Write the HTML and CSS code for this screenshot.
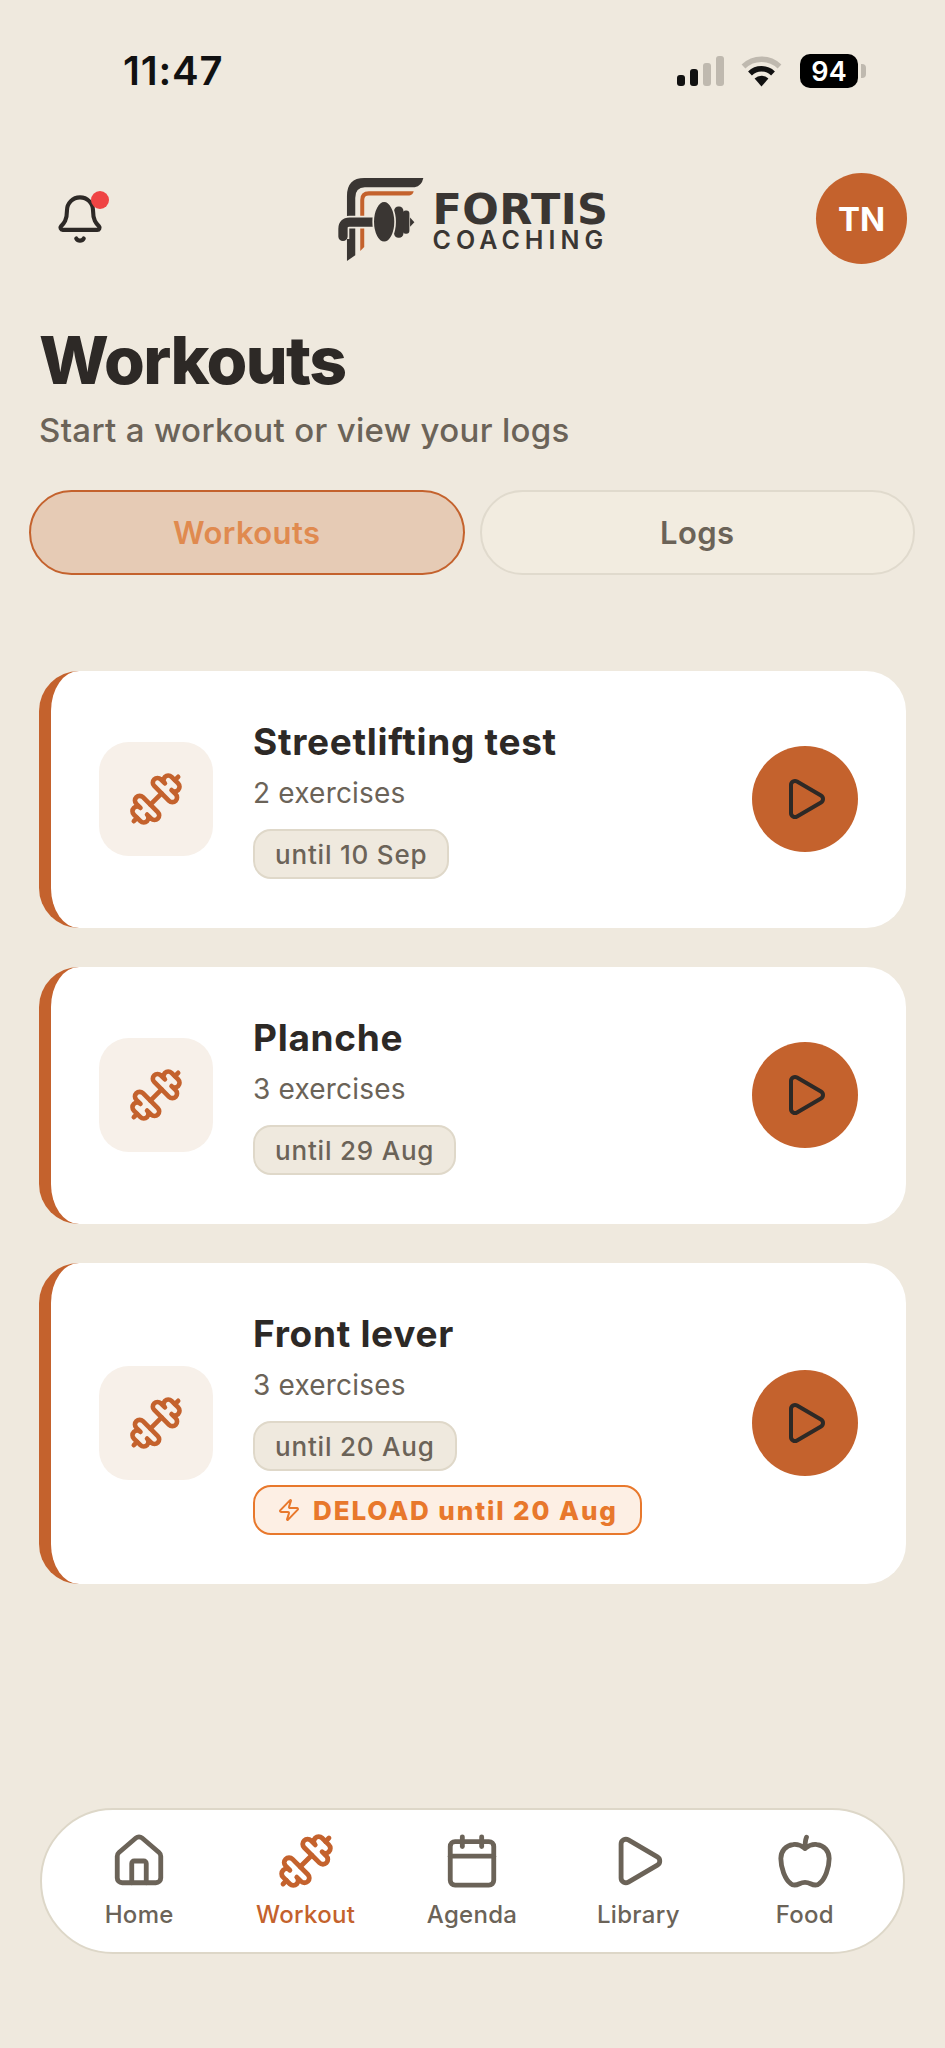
FILE: index.html
```html
<!DOCTYPE html>
<html lang="en">
<head>
<meta charset="utf-8">
<title>Workouts</title>
<link rel="stylesheet" href="styles.css">
</head>
<body>
<svg class="sprite" xmlns="http://www.w3.org/2000/svg">
  <symbol id="dumbbell" viewBox="0 0 24 24"><path d="M17.596 12.768a2 2 0 1 0 2.829-2.829l-1.768-1.767a2 2 0 0 0 2.828-2.829l-2.828-2.828a2 2 0 0 0-2.829 2.828l-1.767-1.768a2 2 0 1 0-2.829 2.829z"/><path d="m2.5 21.5 1.4-1.4"/><path d="m20.1 3.9 1.4-1.4"/><path d="M5.343 21.485a2 2 0 1 0 2.829-2.828l1.767 1.768a2 2 0 1 0 2.829-2.829l-6.364-6.364a2 2 0 1 0-2.829 2.829l1.768 1.767a2 2 0 0 0-2.828 2.829z"/><path d="m9.6 14.4 4.8-4.8"/></symbol>
  <symbol id="play" viewBox="0 0 24 24"><path d="M5 5a2 2 0 0 1 3.008-1.728l11.997 6.998a2 2 0 0 1 .003 3.458l-12 7A2 2 0 0 1 5 19z"/></symbol>
</svg>
<div class="page">
  <div class="status">
    <span class="time">11:47</span>
    <div class="status-icons">
      <div class="signal">
        <i class="bar b1"></i><i class="bar b2"></i><i class="bar b3 off"></i><i class="bar b4 off"></i>
      </div>
      <svg class="wifi" viewBox="0 0 41 32" xmlns="http://www.w3.org/2000/svg">
        <path class="wifi-off" d="M2.5 11.5a26 26 0 0 1 36 0"/>
        <path class="wifi-on" d="M9 18.5a16.5 16.5 0 0 1 23 0"/>
        <path class="wifi-dot" d="M13.6 23.4a10 10 0 0 1 13.8 0L20.5 31.5z"/>
      </svg>
      <div class="battery"><span class="battery-body">94</span><i class="battery-nub"></i></div>
    </div>
  </div>

  <header class="topbar">
    <div class="bell-wrap">
      <svg class="bell" viewBox="0 0 24 24" xmlns="http://www.w3.org/2000/svg"><path d="M10.268 21a2 2 0 0 0 3.464 0"/><path d="M3.262 15.326A1 1 0 0 0 4 17h16a1 1 0 0 0 .74-1.673C19.41 13.956 18 12.499 18 8A6 6 0 0 0 6 8c0 4.499-1.411 5.956-2.738 7.326"/></svg>
      <i class="bell-dot"></i>
    </div>
    <div class="logo">
      <svg class="logo-mark" viewBox="50 50 262 254" xmlns="http://www.w3.org/2000/svg">
        <path class="lm-dark" d="M310 52L132 52Q80 52 80 106L80 302L105 285L105 112Q105 80 134 80L284 80Q305 76 310 52Z"/>
        <path class="lm-orange" d="M281 92L146 92Q120 92 120 118L120 272L132 260L132 118Q132 105 146 105L268 105Q278 103 281 92Z"/>
        <path class="lm-gap" d="M176 185L88 185Q68 185 68 205L68 236"/>
        <path class="lm-bar" d="M176 185L88 185Q68 185 68 205L68 228"/>
        <path class="lm-dark" d="M270 171L283 185L270 199Z"/>
        <rect class="lm-dark" x="248" y="150" width="20" height="70" rx="9"/>
        <rect class="lm-dark" x="222" y="138" width="28" height="94" rx="13"/>
        <ellipse class="lm-plate" cx="192" cy="184" rx="33" ry="62"/>
      </svg>
      <div class="logo-text">
        <span class="logo-top">FORTIS</span>
        <span class="logo-bottom">COACHING</span>
      </div>
    </div>
    <div class="avatar">TN</div>
  </header>

  <h1 class="title">Workouts</h1>
  <p class="subtitle">Start a workout or view your logs</p>

  <div class="tabs">
    <div class="tab tab-active">Workouts</div>
    <div class="tab">Logs</div>
  </div>

  <main class="cards">
    <article class="card">
      <div class="card-icon"><svg class="icon-dumbbell"><use href="#dumbbell"/></svg></div>
      <div class="card-body">
        <h2 class="card-title">Streetlifting test</h2>
        <p class="card-sub">2 exercises</p>
        <div class="chips"><span class="chip">until 10 Sep</span></div>
      </div>
      <div class="play-btn"><svg class="icon-play"><use href="#play"/></svg></div>
    </article>
    <article class="card">
      <div class="card-icon"><svg class="icon-dumbbell"><use href="#dumbbell"/></svg></div>
      <div class="card-body">
        <h2 class="card-title">Planche</h2>
        <p class="card-sub">3 exercises</p>
        <div class="chips"><span class="chip">until 29 Aug</span></div>
      </div>
      <div class="play-btn"><svg class="icon-play"><use href="#play"/></svg></div>
    </article>
    <article class="card">
      <div class="card-icon"><svg class="icon-dumbbell"><use href="#dumbbell"/></svg></div>
      <div class="card-body">
        <h2 class="card-title">Front lever</h2>
        <p class="card-sub">3 exercises</p>
        <div class="chips">
          <span class="chip">until 20 Aug</span>
          <span class="chip chip-deload">
            <svg class="icon-zap" viewBox="0 0 24 24" xmlns="http://www.w3.org/2000/svg"><path d="M4 14a1 1 0 0 1-.78-1.63l9.9-10.2a.5.5 0 0 1 .86.46l-1.92 6.02A1 1 0 0 0 13 10h7a1 1 0 0 1 .78 1.63l-9.9 10.2a.5.5 0 0 1-.86-.46l1.92-6.02A1 1 0 0 0 11 14z"/></svg>
            DELOAD until 20 Aug
          </span>
        </div>
      </div>
      <div class="play-btn"><svg class="icon-play"><use href="#play"/></svg></div>
    </article>
  </main>

  <nav class="nav">
    <div class="nav-item">
      <svg class="nav-icon" viewBox="0 0 24 24" xmlns="http://www.w3.org/2000/svg"><path d="M15 21v-8a1 1 0 0 0-1-1h-4a1 1 0 0 0-1 1v8"/><path d="M3 10a2 2 0 0 1 .709-1.528l7-5.999a2 2 0 0 1 2.582 0l7 5.999A2 2 0 0 1 21 10v9a2 2 0 0 1-2 2H5a2 2 0 0 1-2-2z"/></svg>
      <span>Home</span>
    </div>
    <div class="nav-item nav-active">
      <svg class="nav-icon"><use href="#dumbbell"/></svg>
      <span>Workout</span>
    </div>
    <div class="nav-item">
      <svg class="nav-icon" viewBox="0 0 24 24" xmlns="http://www.w3.org/2000/svg"><path d="M8 2v4"/><path d="M16 2v4"/><rect width="18" height="18" x="3" y="4" rx="2"/><path d="M3 10h18"/></svg>
      <span>Agenda</span>
    </div>
    <div class="nav-item">
      <svg class="nav-icon"><use href="#play"/></svg>
      <span>Library</span>
    </div>
    <div class="nav-item">
      <svg class="nav-icon" viewBox="0 0 24 24" xmlns="http://www.w3.org/2000/svg"><path d="M12 6.8C13.5 5.6 15.5 5 17 5.2C20 5.5 22 8 22 11C22 15 20.2 19.5 18 21.3C16.8 22.4 15.5 22 14.3 21.4C13 20.8 11 20.8 9.7 21.4C8.5 22 7.2 22.4 6 21.3C3.8 19.5 2 15 2 11C2 8 4 5.5 7 5.2C8.5 5 10.5 5.6 12 6.8Z"/><path d="M12 6.8C12 4.8 12.1 3.4 12.6 2.2"/></svg>
      <span>Food</span>
    </div>
  </nav>
</div>
</body>
</html>
```

FILE: styles.css
```css
* { box-sizing: border-box; }
html, body { margin: 0; padding: 0; }
body {
  background: #EFE9DE;
  font-family: "Inter", "Liberation Sans", sans-serif;
  color: #2D2926;
}
.sprite { display: none; }
.page {
  display: flex;
  flex-direction: column;
  min-height: 2048px;
  padding-top: 51px;
  padding-bottom: 94px;
}

/* status bar */
.status {
  display: flex;
  align-items: center;
  justify-content: space-between;
  height: 40px;
  padding: 0 79px 0 123px;
}
.time { font-size: 40px; font-weight: 600; line-height: 40px; color: #111; letter-spacing: 0.8px; }
.status-icons { display: flex; align-items: center; }
.signal { display: flex; align-items: flex-end; gap: 5px; height: 30px; margin-right: 17px; }
.bar { display: block; width: 8px; border-radius: 3px; background: #111; }
.b1 { height: 11px; }
.b2 { height: 17px; }
.b3 { height: 23px; }
.b4 { height: 30px; }
.bar.off { background: #BFB9AF; }
.wifi { width: 41px; height: 32px; margin-right: 18px; }
.wifi path { fill: none; stroke-width: 5.5px; }
.wifi .wifi-off { stroke: #BFB9AF; }
.wifi .wifi-on { stroke: #111; }
.wifi .wifi-dot { fill: #111; stroke: none; }
.battery { display: flex; align-items: center; gap: 3px; }
.battery-body {
  display: flex;
  align-items: center;
  justify-content: center;
  width: 58px;
  height: 34px;
  border-radius: 10px;
  background: #000;
  color: #fff;
  font-size: 27px;
  font-weight: 600;
}
.battery-nub { display: block; width: 5px; height: 14px; border-radius: 0 4px 4px 0; background: #BFB9AF; }

/* top bar */
.topbar {
  display: grid;
  grid-template-columns: 1fr auto 1fr;
  align-items: center;
  margin-top: 82px;
  padding: 0 38px;
}
.bell-wrap { position: relative; width: 52px; height: 52px; margin-left: 16px; }
.bell { display: block; width: 52px; height: 52px; fill: none; stroke: #2D2926; stroke-width: 1.9; stroke-linecap: round; stroke-linejoin: round; }
.bell-dot {
  position: absolute;
  top: -2px;
  left: 37px;
  width: 18px;
  height: 18px;
  border-radius: 50%;
  background: #EF4444;
}
.logo { display: flex; align-items: center; gap: 9px; }
.logo-mark { display: block; width: 87px; height: 85px; margin-top: 2px; }
.lm-dark { fill: #3A3633; }
.lm-plate { fill: #3A3633; stroke: #EFE9DE; stroke-width: 5px; }
.lm-orange { fill: #C4622D; }
.lm-gap { fill: none; stroke: #EFE9DE; stroke-width: 38px; }
.lm-bar { fill: none; stroke: #3A3633; stroke-width: 28px; stroke-linecap: round; }
.logo-text { display: flex; flex-direction: column; gap: 3px; margin-top: 5px; }
.logo-top {
  font-family: "DejaVu Sans", sans-serif;
  font-size: 43px;
  font-weight: 700;
  line-height: 34px;
  color: #3A3633;
  letter-spacing: 0.4px;
}
.logo-bottom {
  font-size: 25px;
  font-weight: 600;
  line-height: 22px;
  color: #3A3633;
  letter-spacing: 5px;
}
.avatar {
  display: flex;
  align-items: center;
  justify-content: center;
  justify-self: end;
  width: 91px;
  height: 91px;
  border-radius: 50%;
  background: #C4622D;
  color: #fff;
  font-size: 33px;
  font-weight: 700;
}

/* heading */
.title {
  margin: 60px 0 0;
  padding-left: 39px;
  font-size: 66px;
  line-height: 72px;
  font-weight: 800;
  letter-spacing: -1.6px;
  color: #2D2926;
}
.subtitle {
  margin: 12px 0 0;
  padding-left: 39px;
  font-size: 33px;
  line-height: 44px;
  font-weight: 500;
  letter-spacing: 0.33px;
  color: #6B6358;
}

/* tabs */
.tabs { display: flex; gap: 15px; margin-top: 38px; padding: 0 30px 0 29px; }
.tab {
  flex: 1;
  display: flex;
  align-items: center;
  justify-content: center;
  height: 85px;
  border: 2.5px solid #E0DACD;
  border-radius: 43px;
  background: #F2ECE0;
  color: #6B6358;
  font-size: 31px;
  font-weight: 600;
  letter-spacing: 0.4px;
}
.tab-active {
  background: #E6CBB5;
  border-color: #C4622D;
  color: #E08A4F;
}

/* cards */
.cards { display: flex; flex-direction: column; gap: 39px; margin-top: 96px; padding: 0 39px; }
.card {
  display: flex;
  align-items: center;
  gap: 40px;
  padding: 48px 48px 49px;
  background: #fff;
  border-left: 12px solid #C4622D;
  border-radius: 40px;
}
.card-icon {
  display: flex;
  align-items: center;
  justify-content: center;
  flex: none;
  width: 114px;
  height: 114px;
  border-radius: 30px;
  background: #F7F0E9;
}
.icon-dumbbell { width: 56px; height: 56px; fill: none; stroke: #C4622D; stroke-width: 2; stroke-linecap: round; stroke-linejoin: round; }
.card-body { flex: 1; min-width: 0; }
.card-title { margin: 0; font-size: 37px; line-height: 46px; font-weight: 700; letter-spacing: 0.7px; color: #2D2926; }
.card-sub { margin: 11px 0 0; font-size: 28px; line-height: 34px; font-weight: 400; letter-spacing: 0.2px; color: #6B6358; }
.chips { display: flex; flex-direction: column; align-items: flex-start; gap: 14px; margin-top: 19px; }
.chip {
  display: flex;
  align-items: center;
  height: 50px;
  padding: 0 20px;
  border: 2.5px solid #DFD8C9;
  border-radius: 18px;
  background: #EFE9DE;
  color: #6B6358;
  font-size: 26px;
  font-weight: 500;
  letter-spacing: 0.8px;
}
.chip-deload {
  gap: 12px;
  padding: 0 22px;
  border-color: #E8782C;
  background: #FDEFE4;
  color: #E8782C;
  font-size: 26px;
  font-weight: 800;
  letter-spacing: 1.9px;
}
.icon-zap { width: 24px; height: 24px; fill: none; stroke: #E8782C; stroke-width: 2; stroke-linecap: round; stroke-linejoin: round; }
.play-btn {
  display: flex;
  align-items: center;
  justify-content: center;
  flex: none;
  width: 106px;
  height: 106px;
  border-radius: 50%;
  background: #C4622D;
}
.icon-play { width: 48px; height: 48px; fill: none; stroke: #2D2926; stroke-width: 2; stroke-linecap: round; stroke-linejoin: round; }

/* bottom nav */
.nav {
  display: flex;
  margin: auto 40px 0;
  padding: 22px 15px 22px 14px;
  background: #fff;
  border: 2px solid #DDD7C8;
  border-radius: 73px;
}
.nav-item {
  flex: 1;
  display: flex;
  flex-direction: column;
  align-items: center;
  gap: 10px;
  color: #6B6358;
  font-size: 24px;
  line-height: 30px;
  font-weight: 500;
  letter-spacing: 0.3px;
}
.nav-active { color: #C4622D; }
.nav-icon { width: 58px; height: 58px; fill: none; stroke: currentColor; stroke-width: 2; stroke-linecap: round; stroke-linejoin: round; }
```
